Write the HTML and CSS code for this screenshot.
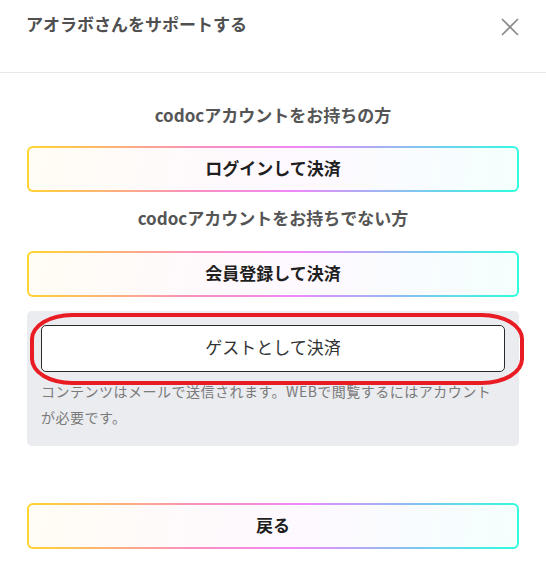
FILE: index.html
```html
<!DOCTYPE html>
<html lang="ja">
<head>
<meta charset="utf-8">
<title>アオラボさんをサポートする</title>
<link rel="stylesheet" href="styles.css">
</head>
<body>
<div class="modal">
  <header class="modal-header">
    <h1 class="modal-title">アオラボさんをサポートする</h1>
    <button class="close-btn" aria-label="閉じる">
      <svg width="18" height="18" viewBox="0 0 18 18"><path d="M1 1L17 17M17 1L1 17" stroke="#8a8a8a" stroke-width="1.7" fill="none"/></svg>
    </button>
  </header>
  <main class="modal-body">
    <p class="section-label label-first">codocアカウントをお持ちの方</p>
    <button class="grad-btn">ログインして決済</button>
    <p class="section-label label-second">codocアカウントをお持ちでない方</p>
    <button class="grad-btn">会員登録して決済</button>
    <div class="guest-box">
      <button class="guest-btn">ゲストとして決済</button>
      <p class="guest-note">コンテンツはメールで送信されます。WEBで閲覧するにはアカウントが必要です。</p>
      <div class="highlight"></div>
    </div>
    <button class="grad-btn back-btn">戻る</button>
  </main>
</div>
</body>
</html>
```
FILE: styles.css
```css
* { box-sizing: border-box; }
html, body { margin: 0; padding: 0; background: #fff; }
body {
  font-family: "Noto Sans CJK JP", "Noto Sans", "Liberation Sans", sans-serif;
  color: #333;
}
.modal { width: 546px; }
.modal-header {
  height: 73px;
  border-bottom: 1px solid #e8e8e8;
  display: flex;
  justify-content: space-between;
  align-items: flex-start;
  padding: 0 27px 0 26px;
}
.modal-title {
  margin: 12px 0 0;
  font-size: 17px;
  line-height: 24px;
  font-weight: 700;
  color: #505050;
}
.close-btn {
  margin-top: 18px;
  padding: 0;
  border: 0;
  background: none;
  width: 18px;
  height: 18px;
  display: flex;
}
.modal-body {
  padding: 0 27px;
  display: flex;
  flex-direction: column;
}
.section-label {
  margin: 0;
  text-align: center;
  font-size: 17px;
  line-height: 24px;
  font-weight: 700;
  color: #555;
}
.label-first { margin-top: 30px; margin-bottom: 19px; }
.label-second { margin-top: 14px; margin-bottom: 21px; }
.grad-btn {
  width: 100%;
  height: 46px;
  border: 2px solid transparent;
  border-radius: 6px;
  background:
    linear-gradient(rgba(255,255,255,0.95), rgba(255,255,255,0.95)) padding-box,
    linear-gradient(100deg, #ffd62c 0%, #f98fc0 35%, #ef88f8 55%, #7cc8f0 80%, #2bffe0 100%) padding-box,
    linear-gradient(100deg, #ffd62c 0%, #f98fc0 35%, #ef88f8 55%, #7cc8f0 80%, #2bffe0 100%) border-box;
  font-family: inherit;
  font-size: 17px;
  font-weight: 700;
  color: #1f1f1f;
  padding: 0 0 4px;
}
.guest-box {
  position: relative;
  margin-top: 14px;
  background: #ebecf0;
  border-radius: 5px;
  padding: 14px 14px 16px;
}
.guest-btn {
  width: 100%;
  height: 47px;
  background: #fff;
  border: 1px solid #2a2a2a;
  border-radius: 5px;
  font-family: inherit;
  font-size: 17px;
  font-weight: 400;
  color: #333;
  padding: 0 0 4px;
}
.guest-note {
  margin: 6px 0 0;
  font-size: 14px;
  line-height: 26px;
  letter-spacing: 0.5px;
  color: #7a7a7a;
}
.highlight {
  position: absolute;
  left: 3px;
  top: 2px;
  width: 494px;
  height: 72px;
  border: 4px solid #e91b23;
  border-radius: 42px / 26px;
  pointer-events: none;
}
.back-btn { margin-top: 57px; }
```
